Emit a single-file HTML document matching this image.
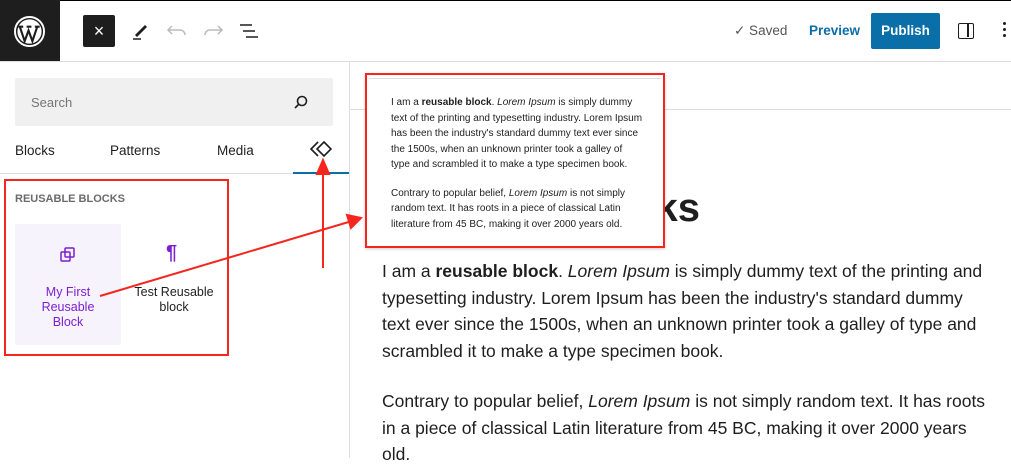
<!DOCTYPE html>
<html><head><meta charset="utf-8"><style>
*{margin:0;padding:0;box-sizing:border-box}
body{width:1011px;height:458px;overflow:hidden;background:#fff;font-family:"Liberation Sans",sans-serif;position:relative;color:#1e1e1e}
.a{position:absolute}
</style></head><body>
<div class="a" style="left:0;top:0;width:1011px;height:1px;background:#000"></div>
<div class="a" style="left:0;top:61px;width:1011px;height:1px;background:#ddd"></div>
<div class="a" style="left:0;top:0;width:60px;height:61px;background:#1e1e1e"></div>
<svg class="a" style="left:14px;top:16px" width="31" height="31" viewBox="0 0 32 32"><circle cx="16" cy="16" r="15" fill="none" stroke="#fff" stroke-width="2"/><circle cx="16" cy="16" r="12.5" fill="#fff"/><path d="M6 11 L11 26 L15 15 L19 26 L24 11 M4.5 11h5 M13 11h5 M21.5 11h5" stroke="#1e1e1e" stroke-width="2.2" fill="none"/></svg>
<div class="a" style="left:83px;top:15px;width:32px;height:32px;background:#1e1e1e;border-radius:2px;color:#fff;font-size:18px;text-align:center;line-height:32px">×</div>
<svg class="a" style="left:130px;top:20px" width="22" height="22" viewBox="0 0 22 22"><path d="M5 15 L15 5 L17 7 L7 17 Z" fill="#1e1e1e"/><path d="M3 19h8" stroke="#1e1e1e" stroke-width="1.5"/></svg>
<svg class="a" style="left:166px;top:22px" width="22" height="18" viewBox="0 0 22 18"><path d="M6 4 L2 8 L6 12 M2 8h12a5 5 0 0 1 5 5" stroke="#bbb" stroke-width="1.5" fill="none"/></svg>
<svg class="a" style="left:202px;top:22px" width="22" height="18" viewBox="0 0 22 18"><path d="M16 4 L20 8 L16 12 M20 8H8a5 5 0 0 0 -5 5" stroke="#bbb" stroke-width="1.5" fill="none"/></svg>
<svg class="a" style="left:238px;top:22px" width="22" height="18" viewBox="0 0 22 18"><path d="M2 3h12M5 9h12M8 15h12" stroke="#1e1e1e" stroke-width="1.6"/></svg>
<div class="a" style="left:734px;top:23px;font-size:13.5px;color:#555">✓ Saved</div>
<div class="a" style="left:809px;top:23px;font-size:13.5px;color:#0a6ea8;font-weight:bold">Preview</div>
<div class="a" style="left:871px;top:13px;width:69px;height:36px;background:#0a6ea8;border-radius:2px;color:#fff;font-size:13.5px;font-weight:bold;text-align:center;line-height:36px">Publish</div>
<div class="a" style="left:958px;top:23px;width:16px;height:16px;border:1.6px solid #1e1e1e;border-radius:2px"><div style="position:absolute;left:8px;top:0;width:1.6px;height:13px;background:#1e1e1e"></div></div>
<div class="a" style="left:1003px;top:22px;width:3px;line-height:6px;font-size:0"><div style="width:3px;height:3px;background:#1e1e1e;border-radius:50%;margin-bottom:3px"></div><div style="width:3px;height:3px;background:#1e1e1e;border-radius:50%;margin-bottom:3px"></div><div style="width:3px;height:3px;background:#1e1e1e;border-radius:50%"></div></div>
<!-- sidebar -->
<div class="a" style="left:349px;top:62px;width:1px;height:396px;background:#ddd"></div>
<div class="a" style="left:15px;top:78px;width:318px;height:48px;background:#f0f0f0;border-radius:2px"></div>
<div class="a" style="left:31px;top:95px;font-size:13px;color:#757575">Search</div>
<svg class="a" style="left:293px;top:94px" width="16" height="16" viewBox="0 0 16 16"><circle cx="9" cy="7" r="4.5" fill="none" stroke="#1e1e1e" stroke-width="1.6"/><path d="M6 10 L2 14" stroke="#1e1e1e" stroke-width="1.6"/></svg>
<div class="a" style="left:15px;top:143px;font-size:13.5px">Blocks</div>
<div class="a" style="left:110px;top:143px;font-size:13.5px">Patterns</div>
<div class="a" style="left:217px;top:143px;font-size:13.5px">Media</div>
<svg class="a" style="left:310px;top:140px" width="22" height="18" viewBox="0 0 22 18"><path d="M8 2 L1 9 L8 16 M14 2 L21 9 L14 16 L7 9 Z" fill="none" stroke="#1e1e1e" stroke-width="1.6"/></svg>
<div class="a" style="left:0;top:173px;width:349px;height:1px;background:#ddd"></div>
<div class="a" style="left:293px;top:172px;width:56px;height:2px;background:#0a6ea8"></div>
<div class="a" style="left:15px;top:193px;font-size:11px;font-weight:bold;color:#6b6b6b">REUSABLE BLOCKS</div>
<div class="a" style="left:15px;top:224px;width:106px;height:121px;background:#f7f3fc;border-radius:2px"></div>
<svg class="a" style="left:59px;top:246px" width="18" height="18" viewBox="0 0 18 18"><rect x="6" y="2" width="9" height="9" rx="1" fill="none" stroke="#7b1fd0" stroke-width="1.5"/><rect x="2" y="6" width="9" height="9" rx="1" fill="none" stroke="#7b1fd0" stroke-width="1.5"/></svg>
<div class="a" style="left:15px;top:285px;width:106px;text-align:center;font-size:12.5px;line-height:15px;color:#7b1fd0">My First<br>Reusable<br>Block</div>
<div class="a" style="left:166px;top:242px;font-size:20px;font-weight:bold;color:#7b1fd0">¶</div>
<div class="a" style="left:121px;top:285px;width:106px;text-align:center;font-size:12.5px;line-height:15px">Test Reusable<br>block</div>
<!-- editor -->
<div class="a" style="left:350px;top:109px;width:661px;height:1px;background:#ddd"></div>
<div class="a" style="left:300px;top:186px;width:400px;text-align:right;font-size:40px;font-weight:bold;white-space:nowrap">Reusable Blocks</div>
<div class="a" style="left:382px;top:258px;width:612px;font-size:17.5px;line-height:26.7px">I am a <b>reusable block</b>. <i>Lorem Ipsum</i> is simply dummy text of the printing and typesetting industry. Lorem Ipsum has been the industry's standard dummy text ever since the 1500s, when an unknown printer took a galley of type and scrambled it to make a type specimen book.<br><div style="height:23px"></div>Contrary to popular belief, <i>Lorem Ipsum</i> is not simply random text. It has roots in a piece of classical Latin literature from 45 BC, making it over 2000 years old.</div>
<!-- popup -->
<div class="a" style="left:365px;top:73px;width:300px;height:175px;background:#fff;border:2px solid #f5261e;box-shadow:0 1px 3px rgba(0,0,0,.2)"><div style="margin:3px 2px 0;border-top:1px solid #ddd"></div>
<div style="position:absolute;left:24px;top:20px;width:252px;font-size:10px;line-height:15.5px">I am a <b>reusable block</b>. <i>Lorem Ipsum</i> is simply dummy text of the printing and typesetting industry. Lorem Ipsum has been the industry's standard dummy text ever since the 1500s, when an unknown printer took a galley of type and scrambled it to make a type specimen book.<div style="height:13px"></div>Contrary to popular belief, <i>Lorem Ipsum</i> is not simply random text. It has roots in a piece of classical Latin literature from 45 BC, making it over 2000 years old.</div></div>
<!-- annotations -->
<div class="a" style="left:4px;top:179px;width:225px;height:177px;border:2px solid #f5261e"></div>
<svg class="a" style="left:0;top:0" width="1011" height="458"><g stroke="#f5261e" stroke-width="2" fill="#f5261e"><path d="M323 268 V170"/><path d="M323 160 L317 174 L329 174 Z"/><path d="M100 296 L352 221"/><path d="M361 218 L347 215 L351 228 Z"/></g></svg>
</body></html>
